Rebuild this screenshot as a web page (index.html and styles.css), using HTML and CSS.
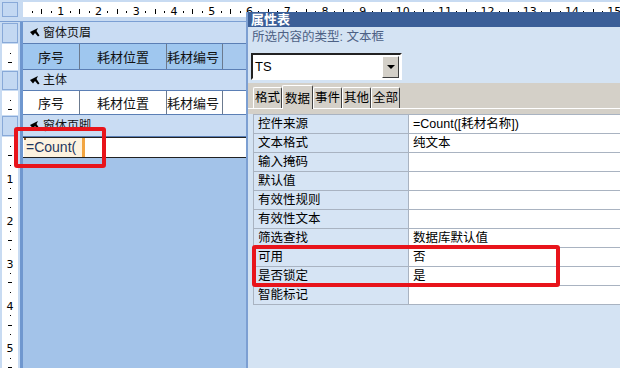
FILE: index.html
```html
<!DOCTYPE html>
<html lang="zh-CN">

<head>
    <meta charset="UTF-8">
    <title>窗体设计 - 属性表</title>
    <link rel="stylesheet" href="styles.css">
</head>

<body>
    <div class="screen">
        <div class="ruler-row">
            <div class="corner"><span class="corner-box"></span></div>
            <div class="hruler" id="hruler" data-ticks="63"></div>
        </div>

        <div class="design">
            <div class="sec-bar bar-1">
                <div class="side"><span class="sel-box"></span></div>
                <div class="bar">
                    <svg class="bar-icon" width="10" height="9" viewBox="0 0 10 9"><path d="M0 4 L8 0 L6.5 3 L9.5 7.5 L8 8.5 L5 5 L3 7.5 Z" fill="#000"/></svg>
                    窗体页眉
                </div>
            </div>
            <div class="sec-body head-body">
                <div class="side"><div class="vruler" data-ticks="2"></div></div>
                <div class="row head-row">
                    <div class="cell c1">序号</div>
                    <div class="cell c2">耗材位置</div>
                    <div class="cell c3">耗材编号</div>
                </div>
            </div>

            <div class="sec-bar bar-2">
                <div class="side"><span class="sel-box"></span></div>
                <div class="bar">
                    <svg class="bar-icon" width="10" height="9" viewBox="0 0 10 9"><path d="M0 4 L8 0 L6.5 3 L9.5 7.5 L8 8.5 L5 5 L3 7.5 Z" fill="#000"/></svg>
                    主体
                </div>
            </div>
            <div class="sec-body main-body">
                <div class="side"><div class="vruler" data-ticks="2"></div></div>
                <div class="row main-row">
                    <div class="cell c1">序号</div>
                    <div class="cell c2">耗材位置</div>
                    <div class="cell c3">耗材编号</div>
                </div>
            </div>

            <div class="sec-bar bar-3">
                <div class="side"><span class="sel-box"></span></div>
                <div class="bar">
                    <svg class="bar-icon" width="10" height="9" viewBox="0 0 10 9"><path d="M0 4 L8 0 L6.5 3 L9.5 7.5 L8 8.5 L5 5 L3 7.5 Z" fill="#000"/></svg>
                    窗体页脚
                </div>
            </div>
            <div class="sec-body foot-body">
                <div class="side"><div class="vruler" data-ticks="24"></div></div>
                <div class="foot-area">
                    <div class="textbox">
                        <span class="editing"><i class="handle"></i>=Count(</span>
                    </div>
                </div>
            </div>
        </div>

        <div class="props">
            <div class="props-title">属性表</div>
            <div class="props-info">
                <div class="sel-type">所选内容的类型: 文本框</div>
                <div class="combo">
                    <span class="combo-text">TS</span>
                    <span class="combo-btn"><i class="arrow"></i></span>
                </div>
            </div>
            <div class="tabs">
                <span class="tab">格式</span>
                <span class="tab active">数据</span>
                <span class="tab">事件</span>
                <span class="tab">其他</span>
                <span class="tab">全部</span>
            </div>
            <div class="tab-gap"></div>
            <table class="grid" id="grid"></table>
        </div>

        <div class="mark mark-left"></div>
        <div class="mark mark-right"></div>
    </div>

    <script>
        var props = [
            ["控件来源", "=Count([耗材名称])"],
            ["文本格式", "纯文本"],
            ["输入掩码", ""],
            ["默认值", ""],
            ["有效性规则", ""],
            ["有效性文本", ""],
            ["筛选查找", "数据库默认值"],
            ["可用", "否"],
            ["是否锁定", "是"],
            ["智能标记", ""]
        ];

        var grid = document.getElementById("grid");
        props.forEach(function (p) {
            var row = grid.insertRow();
            row.insertCell().textContent = p[0];
            row.insertCell().textContent = p[1];
        });

        // quarter-cm ticks: dot, half mark, dot, number
        function buildRuler(el) {
            var count = parseInt(el.getAttribute("data-ticks"), 10);
            var html = '<span class="tick-pad"></span>';
            for (var k = 1; k <= count; k++) {
                if (k % 4 === 0) {
                    html += '<span class="tick"><b class="num">' + (k / 4) + '</b></span>';
                } else if (k % 4 === 2) {
                    html += '<span class="tick"><i class="half"></i></span>';
                } else {
                    html += '<span class="tick"><i class="dot"></i></span>';
                }
            }
            el.innerHTML = html;
        }

        buildRuler(document.getElementById("hruler"));
        document.querySelectorAll(".vruler").forEach(buildRuler);
    </script>
</body>

</html>
```

FILE: styles.css
```css
body {
    margin: 0;
    font-family: "Liberation Sans", "Noto Sans CJK SC", sans-serif;
    font-size: 12px;
}

.screen {
    position: relative;
    width: 620px;
    height: 368px;
    overflow: hidden;
    background: #a3c3e9;
    display: flex;
    flex-direction: column;
}

/* top ruler */
.ruler-row {
    display: flex;
    height: 21px;
    background: #c8dbf2;
    border-bottom: 1px solid #7b9fd3;
    flex: 0 0 auto;
}

.corner {
    width: 21px;
    padding: 2px 0 0 2px;
}

.corner-box {
    display: block;
    width: 14px;
    height: 13px;
    background: #c3d8f2;
    border: 1px solid #88a9d8;
}

.hruler {
    flex: 1;
    margin-top: 2px;
    height: 15px;
    background: #fff;
    display: flex;
    align-items: center;
    padding-top: 4px;
    box-sizing: border-box;
    overflow: hidden;
}

.hruler .tick-pad {
    flex: 0 0 4.72px;
}

.hruler .tick {
    flex: 0 0 9.45px;
    display: flex;
    justify-content: center;
    align-items: center;
}

.hruler .dot {
    width: 1px;
    height: 2px;
    background: #000;
}

.hruler .half {
    width: 1px;
    height: 5px;
    background: #000;
}

.num {
    font-weight: normal;
    font-size: 11px;
    line-height: 9px;
    color: #000;
    font-family: "DejaVu Sans", sans-serif;
}

/* design sections */
.design {
    flex: 1;
    display: flex;
    flex-direction: column;
}

.side {
    width: 16px;
    padding: 0 2px;
    background: #c8dbf2;
    border-right: 3px solid #6f97cf;
    flex: 0 0 auto;
}

.sec-bar,
.sec-body {
    display: flex;
}

.sec-bar {
    height: 22px;
}

.bar-2 {
    height: 21px;
}

.sel-box {
    display: block;
    height: 18px;
    margin-top: 1px;
    background: #c3d8f2;
    border: 1px solid #88a9d8;
    width: 14px;
}

.bar-2 .sel-box {
    height: 17px;
}

.bar {
    flex: 1;
    background: #c9dcf3;
    border-bottom: 1px solid #5b7fb5;
    display: flex;
    align-items: center;
    padding-left: 7px;
    gap: 3px;
    line-height: 14px;
    color: #111;
}

.bar-icon {
    flex: 0 0 auto;
}

.vruler {
    height: 100%;
    background: #fff;
    display: flex;
    flex-direction: column;
    align-items: center;
    overflow: hidden;
}

.vruler .tick-pad {
    flex: 0 0 4.72px;
}

.vruler .tick {
    flex: 0 0 9.45px;
    display: flex;
    justify-content: center;
    align-items: center;
}

.vruler .dot {
    width: 1px;
    height: 1px;
    background: #000;
}

.vruler .half {
    width: 4px;
    height: 1px;
    background: #000;
}

.vruler .num {
    margin-top: 5px;
}

.head-body {
    height: 26px;
}

.main-body {
    height: 24px;
}

.foot-body {
    flex: 1;
}

.row {
    flex: 1;
    display: flex;
    border-bottom: 1px solid #5b7fb5;
}

.head-row {
    background: #a7c9ee;
}

.main-row {
    background: #fff;
}

.cell {
    border-right: 1px solid #6b7a8f;
    display: flex;
    align-items: center;
    justify-content: center;
    font-size: 13px;
    color: #111;
}

.head-row .cell {
    background: #9fc7ef;
}

.c1 {
    width: 56px;
}

.c2 {
    width: 86px;
}

.c3 {
    width: 55px;
    justify-content: flex-start;
}

.foot-area {
    flex: 1;
    background: #a3c3e9;
}

.textbox {
    height: 19px;
    background: #fff;
    border-top: 1px solid #222;
    border-bottom: 1px solid #222;
    display: flex;
}

.editing {
    position: relative;
    margin-left: 1px;
    width: 56px;
    background: #fdf2df;
    border-right: 3px solid #f2a541;
    font-size: 14px;
    line-height: 19px;
    padding-left: 2px;
    color: #1f3760;
}

.handle {
    position: absolute;
    left: 0;
    top: 0;
    width: 2px;
    height: 2px;
    background: #8a5a2a;
}

/* property sheet window */
.props {
    position: absolute;
    left: 246px;
    top: 12px;
    right: 0;
    bottom: 0;
    background: #d4e3f3;
    border-left: 2px solid #7c9fd2;
    display: flex;
    flex-direction: column;
}

.props-title {
    height: 15px;
    line-height: 15px;
    background: #3b5f98;
    color: #fff;
    font-weight: bold;
    font-size: 13px;
    padding-left: 3px;
}

.props-info {
    height: 56px;
    padding: 2px 0 0 3px;
    box-sizing: border-box;
}

.sel-type {
    line-height: 16px;
    color: #4d6185;
    font-size: 12.5px;
    padding-left: 1px;
}

.combo {
    margin-top: 8px;
    width: 147px;
    height: 23px;
    background: #fff;
    border: 2px solid;
    border-color: #222 #fff #fff #222;
    display: flex;
    align-items: center;
    justify-content: space-between;
}

.combo-text {
    font-size: 13px;
    padding-left: 2px;
    color: #000;
}

.combo-btn {
    width: 15px;
    height: 20px;
    margin-right: 1px;
    background: #d4d0c8;
    border: 1px solid;
    border-color: #fff #404040 #404040 #fff;
    display: flex;
    align-items: center;
    justify-content: center;
}

.arrow {
    width: 0;
    height: 0;
    border-left: 4px solid transparent;
    border-right: 4px solid transparent;
    border-top: 4px solid #000;
}

.tabs {
    height: 25px;
    background: #d4d0c8;
    display: flex;
    align-items: flex-end;
    padding-left: 5px;
    border-bottom: 1px solid #fff;
}

.tab {
    height: 20px;
    line-height: 20px;
    padding: 0 1px;
    font-size: 12.5px;
    color: #000;
    border: 1px solid #fff;
    border-right-color: #404040;
    border-bottom: none;
    border-radius: 2px 2px 0 0;
}

.tab.active {
    height: 23px;
    line-height: 26px;
    margin-bottom: -1px;
    background: #d4d0c8;
    padding: 0 2px;
}

.tab-gap {
    height: 5px;
    background: #d4d0c8;
}

.grid {
    margin-left: 5px;
    width: 367px;
    border-collapse: collapse;
    font-size: 12.5px;
}

.grid td {
    height: 18px;
    padding: 0 0 0 4px;
    border: 1px solid #a9b3c1;
    line-height: 18px;
    color: #000;
    white-space: nowrap;
}

.grid td:first-child {
    width: 150px;
    background: #d6e4f4;
}

.grid td:last-child {
    background: #fff;
    border-right: none;
}

/* red highlight marks */
.mark {
    position: absolute;
    border: 4px solid #e8141b;
    border-radius: 3px;
}

.mark-left {
    left: 14px;
    top: 127px;
    width: 84px;
    height: 33px;
}

.mark-right {
    left: 252px;
    top: 245px;
    width: 300px;
    height: 34px;
}
```
